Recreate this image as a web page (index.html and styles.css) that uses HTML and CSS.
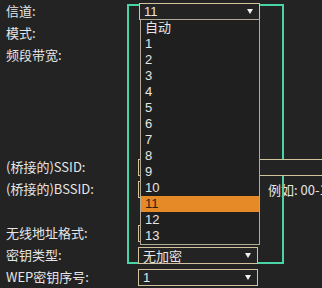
FILE: index.html
```html
<!DOCTYPE html>
<html>

<head>
    <title>无线设置</title>
    <link rel="stylesheet" href="styles.css">
</head>

<body>
    <div class="page">
        <div class="form">
            <div class="row">
                <span class="label">信道:</span>
                <div class="select select-open"><span>11</span><i class="arrow"></i></div>
            </div>
            <div class="row">
                <span class="label">模式:</span>
            </div>
            <div class="row row-band">
                <span class="label">频段带宽:</span>
            </div>
            <div class="row">
                <span class="label">(桥接的)SSID:</span>
                <div class="input input-wide"></div>
            </div>
            <div class="row">
                <span class="label">(桥接的)BSSID:</span>
                <div class="input"></div>
                <span class="hint">例如: 00-1D-0F-11-22-33</span>
            </div>
            <div class="row"></div>
            <div class="row">
                <span class="label">无线地址格式:</span>
                <div class="select"></div>
            </div>
            <div class="row">
                <span class="label">密钥类型:</span>
                <div class="select"><span>无加密</span><i class="arrow"></i></div>
            </div>
            <div class="row">
                <span class="label">WEP密钥序号:</span>
                <div class="select"><span>1</span><i class="arrow"></i></div>
            </div>
        </div>

        <!-- 焦点框 -->
        <div class="focus-frame"></div>

        <!-- 信道下拉列表 -->
        <ul class="dropdown">
            <li>自动</li>
            <li>1</li>
            <li>2</li>
            <li>3</li>
            <li>4</li>
            <li>5</li>
            <li>6</li>
            <li>7</li>
            <li>8</li>
            <li>9</li>
            <li>10</li>
            <li class="selected">11</li>
            <li>12</li>
            <li>13</li>
        </ul>
    </div>
</body>

</html>
```

FILE: styles.css
```css
html,
body {
    margin: 0;
    overflow: hidden;
    background-color: #232323;
}

body {
    font-family: "Noto Sans CJK SC", sans-serif;
    font-size: 13px;
    color: #e6e6e6;
}

.page {
    position: relative;
    width: 322px;
    height: 288px;
    overflow: hidden;
}

.row {
    display: flex;
    align-items: center;
    height: 22px;
}

.row-band {
    align-items: flex-start;
    height: 112px;
}

.label {
    flex-shrink: 0;
    width: 132px;
    padding-left: 6px;
    line-height: 22px;
    white-space: nowrap;
}

.select,
.input {
    position: relative;
    z-index: 2;
    display: flex;
    flex-shrink: 0;
    align-items: center;
    box-sizing: border-box;
    width: 120px;
    height: 17px;
    padding: 0 4px;
    border: 1px solid #d2c39d;
    background-color: #232323;
    font-family: "Liberation Sans", "Noto Sans CJK SC", sans-serif;
    font-size: 13px;
}

.select span {
    flex: 1;
}

.select-open {
    width: 121px;
    margin-left: 1px;
}

.input-wide {
    width: 200px;
}

.arrow {
    width: 0;
    height: 0;
    margin-right: 2px;
    border-left: 3px solid transparent;
    border-right: 3px solid transparent;
    border-top: 5px solid #f2f2f2;
}

.hint {
    margin-left: 10px;
    white-space: nowrap;
}

.focus-frame {
    position: absolute;
    z-index: 1;
    left: 127px;
    top: 4px;
    box-sizing: border-box;
    width: 157px;
    height: 260px;
    border: 2px solid #4ad4a6;
}

.dropdown {
    position: absolute;
    z-index: 3;
    left: 140px;
    top: 19px;
    box-sizing: border-box;
    width: 120px;
    margin: 0;
    padding: 0;
    list-style: none;
    border: 1px solid #b3aa96;
    background-color: #1f1f1f;
    font-family: "Liberation Sans", "Noto Sans CJK SC", sans-serif;
    font-size: 13px;
}

.dropdown li {
    height: 16px;
    line-height: 16px;
    padding-left: 4px;
}

.dropdown .selected {
    background-color: #e58a26;
    color: #2a2118;
}
```
